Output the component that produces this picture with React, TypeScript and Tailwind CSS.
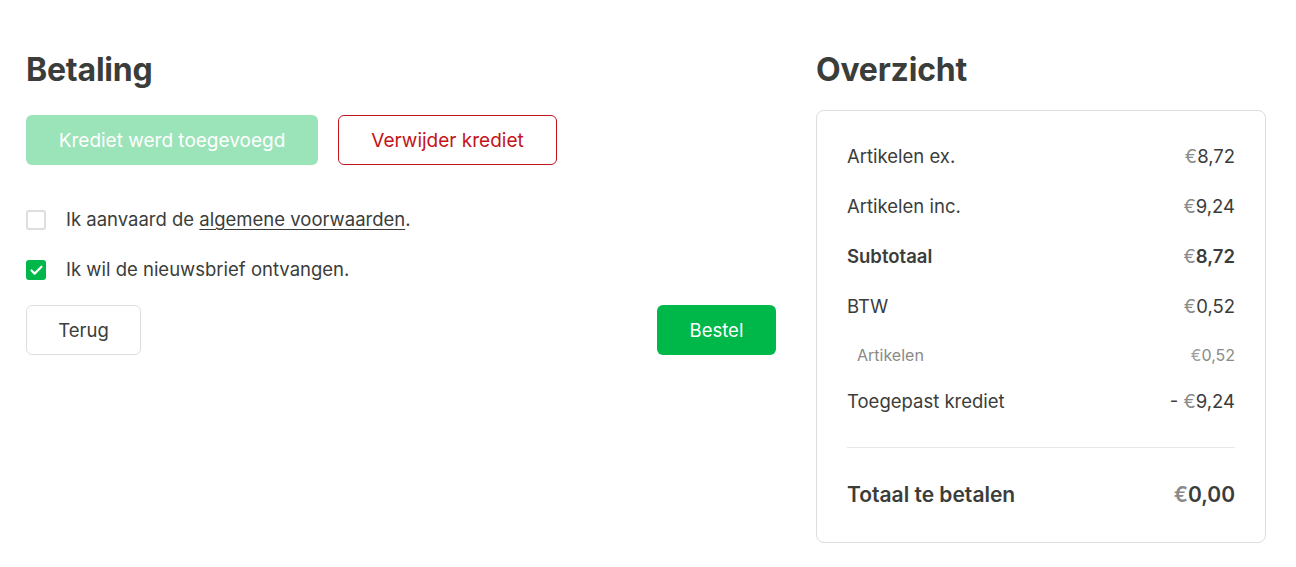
import { Check } from 'lucide-react';

function Row({
  label,
  value,
  bold,
  small,
  prefix,
}: {
  label: string;
  value: string;
  bold?: boolean;
  small?: boolean;
  prefix?: string;
}) {
  if (small) {
    return (
      <div className="flex h-[45px] items-center justify-between pl-[10px] text-[16px] text-[#8a8a8a]">
        <span>{label}</span>
        <span>
          <span className="text-[#a0a0a0]">€</span>
          {value}
        </span>
      </div>
    );
  }
  return (
    <div
      className={`flex h-[50px] items-center justify-between text-[18.5px] text-[#3b3d3b] ${bold ? 'font-semibold' : ''}`}
    >
      <span>{label}</span>
      <span>
        {prefix}
        <span className="font-normal text-[#8a8a8a]">€</span>
        {value}
      </span>
    </div>
  );
}

export default function App() {
  return (
    <div
      className="min-h-[567px] bg-white text-[#3b3d3b]"
      style={{ fontFamily: 'Inter, "Noto Sans", sans-serif' }}
    >
      <div className="flex gap-[40px] pl-[26px] pr-[30px] pt-[48px]">
        {/* Betaling */}
        <div className="w-[750px]">
          <h1 className="text-[32px] font-bold leading-[44px] tracking-[-0.2px] text-[#3a3d3a]">Betaling</h1>
          <div className="mt-[23px] flex gap-[20px]">
            <button className="h-[50px] w-[292px] rounded-[6px] bg-[#9be3b8] pt-[2px] text-[19px] text-white">
              Krediet werd toegevoegd
            </button>
            <button className="h-[50px] w-[219px] rounded-[6px] border border-[#c4141a] pt-[2px] text-[19px] text-[#c4141a]">
              Verwijder krediet
            </button>
          </div>

          <div className="mt-[41px] flex h-[28px] items-center gap-[20px] text-[18.5px]">
            <span className="h-[20px] w-[20px] rounded-[3px] border-2 border-[#dedede] bg-white" />
            <span>
              Ik aanvaard de <span className="underline underline-offset-[3px]">algemene voorwaarden</span>.
            </span>
          </div>
          <div className="mt-[22px] flex h-[28px] items-center gap-[20px] text-[18.5px]">
            <span className="flex h-[20px] w-[20px] items-center justify-center rounded-[3px] bg-[#00b74a]">
              <Check className="h-[15px] w-[15px] text-white" strokeWidth={3.5} />
            </span>
            <span>Ik wil de nieuwsbrief ontvangen.</span>
          </div>

          <div className="mt-[21px] flex justify-between">
            <button className="h-[50px] w-[115px] rounded-[6px] border border-[#dedede] bg-white pt-[2px] text-[18.5px] text-[#3b3d3b]">
              Terug
            </button>
            <button className="h-[50px] w-[119px] rounded-[6px] bg-[#00b74a] pt-[2px] text-[18.5px] text-white">
              Bestel
            </button>
          </div>
        </div>

        {/* Overzicht */}
        <div className="w-[450px]">
          <h2 className="text-[32px] font-bold leading-[44px] tracking-[-0.2px] text-[#3a3d3a]">Overzicht</h2>
          <div className="mt-[18px] rounded-[8px] border border-[#dedede] px-[30px] pt-[21px]">
            <Row label="Artikelen ex." value="8,72" />
            <Row label="Artikelen inc." value="9,24" />
            <Row label="Subtotaal" value="8,72" bold />
            <Row label="BTW" value="0,52" />
            <Row label="Artikelen" value="0,52" small />
            <Row label="Toegepast krediet" value="9,24" prefix="- " />
            <div className="mt-[20px] border-t border-[#e8e8e8]" />
            <div className="flex h-[94px] items-center justify-between text-[21px] font-semibold">
              <span>Totaal te betalen</span>
              <span>
                <span className="text-[#8a8a8a]">€</span>0,00
              </span>
            </div>
          </div>
        </div>
      </div>
    </div>
  );
}
